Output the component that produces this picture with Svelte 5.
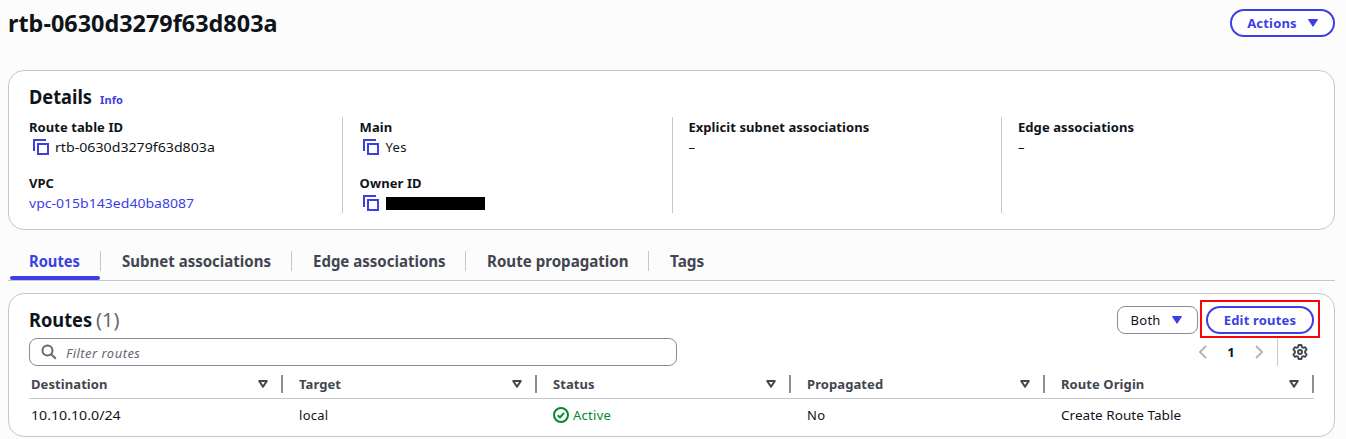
<script>
  const tabs = [
    { label: 'Routes', width: 91, scale: 0.92 },
    { label: 'Subnet associations', width: 191, scale: 0.938 },
    { label: 'Edge associations', width: 174, scale: 0.938 },
    { label: 'Route propagation', width: 183, scale: 0.944 },
    { label: 'Tags', width: 80, scale: 0.96 }
  ];
  const headers = ['Destination', 'Target', 'Status', 'Propagated', 'Route Origin'];
</script>

{#snippet copy()}
  <svg class="copy" width="16" height="16" viewBox="0 0 16 16" fill="none" stroke="currentColor" stroke-width="2">
    <path d="M1 12V1h12" /><path d="M5 5h10v10H5z" />
  </svg>
{/snippet}

{#snippet caret()}
  <svg width="12" height="10" viewBox="0 0 12 10"><path d="M1.500 1.500h9L6 8.300z" fill="currentColor" stroke="currentColor" stroke-linejoin="round" /></svg>
{/snippet}

<main>
  <header class="top">
    <h1>rtb-0630d3279f63d803a</h1>
    <button class="pill actions"><span>Actions</span>{@render caret()}</button>
  </header>

  <section class="card details">
    <div class="title"><h2><span class="narrow">Details</span></h2><a class="info" href="#info">Info</a></div>
    <div class="cols">
      <div class="col">
        <div class="field"><b>Route table ID</b><div class="val">{@render copy()}<span class="num">rtb-0630d3279f63d803a</span></div></div>
        <div class="field"><b>VPC</b><a class="num" href="#vpc">vpc-015b143ed40ba8087</a></div>
      </div>
      <div class="col">
        <div class="field"><b>Main</b><div class="val">{@render copy()}<span>Yes</span></div></div>
        <div class="field"><b>Owner ID</b><div class="val">{@render copy()}<i class="redacted"></i></div></div>
      </div>
      <div class="col"><div class="field"><b>Explicit subnet associations</b><span>–</span></div></div>
      <div class="col"><div class="field"><b>Edge associations</b><span>–</span></div></div>
    </div>
  </section>

  <nav>
    {#each tabs as tab, i}
      <div class="tab" class:active={i === 0} style:width="{tab.width}px"><span style:transform="scaleX({tab.scale})">{tab.label}</span></div>
    {/each}
  </nav>

  <section class="card routes">
    <div class="bar">
      <h2><span class="narrow">Routes</span><span class="count">(1)</span></h2>
      <div class="buttons">
        <button class="select"><span>Both</span>{@render caret()}</button>
        <div class="highlight"><button class="pill edit">Edit routes</button></div>
      </div>
    </div>
    <div class="tools">
      <div class="search">
        <svg width="16" height="16" viewBox="0 0 16 16" fill="none" stroke="currentColor" stroke-width="2"><circle cx="6.500" cy="6.500" r="5" /><path d="M10.200 10.200l4.600 4.600" /></svg>
        <span>Filter routes</span>
      </div>
      <div class="pager">
        <svg width="16" height="16" viewBox="0 0 16 16" fill="none" stroke="#b4b4bb" stroke-width="2"><path d="M11 2L5 8l6 6" /></svg>
        <b>1</b>
        <svg width="16" height="16" viewBox="0 0 16 16" fill="none" stroke="#b4b4bb" stroke-width="2"><path d="M5 2l6 6-6 6" /></svg>
        <div class="prefs">
          <svg width="16" height="16" viewBox="0 0 16 16" fill="none" stroke="#424650" stroke-width="1.900" stroke-linejoin="round"><path d="M6.600 1h2.800l.5 2.100 1.200.7 2.100-.6 1.400 2.400L13.100 7.200v1.600l1.500 1.600-1.400 2.400-2.100-.6-1.200.7L9.400 15H6.600l-.5-2.100-1.200-.7-2.100.6-1.400-2.400L2.900 8.800V7.200L1.400 5.600l1.400-2.400 2.100.6 1.200-.7z" /><circle cx="8" cy="8" r="2" /></svg>
        </div>
      </div>
    </div>
    <div class="grid head">
      {#each headers as h}
        <div class="th"><b>{h}</b>
          <svg width="12" height="10" viewBox="0 0 12 10" fill="none" stroke="#424650" stroke-width="2" stroke-linejoin="round"><path d="M2.200 2h7.600L6 7.800z" /></svg>
        </div>
      {/each}
    </div>
    <div class="grid row">
      <div><span class="num">10.10.10.0/24</span></div>
      <div>local</div>
      <div class="status">
        <svg width="16" height="16" viewBox="0 0 16 16" fill="none" stroke="currentColor" stroke-width="2"><circle cx="8" cy="8" r="7" /><path d="M4.700 8.300l2.300 2.100 4-4.500" /></svg>
        <span>Active</span>
      </div>
      <div>No</div>
      <div><span class="wide">Create Route Table</span></div>
    </div>
  </section>
</main>

<style>
  :global(body) { background: #fcfcfd; overflow: hidden; }
  main { box-sizing: border-box; height: 439px; padding: 0 11px 0 8px; color: #0f141a; font: 13px/20px "Noto Sans", sans-serif; letter-spacing: .28px; overflow: hidden; white-space: nowrap; }
  main * { box-sizing: border-box; }
  h1, h2 { margin: 0; font-weight: 700; }
  h1 { font-size: 24px; line-height: 30px; transform: scaleX(.975); transform-origin: left; letter-spacing: 0; }
  h2 { font-size: 20px; line-height: 24px; letter-spacing: 0; display: flex; }
  .narrow { display: block; width: 63px; transform: scaleX(.91); transform-origin: left; }
  b { font-weight: 700; letter-spacing: .08px; }
  a { color: #3b3fe4; text-decoration: none; }
  svg { flex: none; display: block; }
  .num, .wide { display: block; width: max-content; transform: scaleX(1.09); transform-origin: left; letter-spacing: 0; }
  a.num { transform: scaleX(1.08); }
  .wide { transform: scaleX(1.045); }
  button { margin: 0; font: inherit; letter-spacing: inherit; background: #fff; display: flex; align-items: center; height: 28px; padding: 0; }
  .pill { border: 2px solid #3b3fe4; border-radius: 14px; color: #3b3fe4; font-weight: 700; letter-spacing: .18px; justify-content: center; }
  .top { display: flex; justify-content: space-between; align-items: center; height: 46px; }
  .actions { width: 105px; gap: 10px; padding-left: 1px; }
  .card { background: #fff; border: 1px solid #c6c6cd; border-radius: 16px; padding: 0 20px; }
  .details { margin-top: 24px; height: 160px; padding-top: 14px; }
  .title { display: flex; align-items: baseline; gap: 8px; height: 32px; }
  .info { font-size: 11px; font-weight: 700; letter-spacing: .1px; }
  .cols { display: grid; grid-template-columns: repeat(4, 329.6px); margin-left: -16.500px; }
  .col { height: 96px; padding-left: 15.700px; display: flex; flex-direction: column; gap: 16px; border-left: 1px solid #c6c6cd; }
  .col:first-child { border-color: transparent; padding-left: 15.400px; }
  .col:nth-child(2) { padding-left: 16.500px; }
  .col:nth-child(2) .val { padding-left: 3px; gap: 7px; }
  .field { display: flex; flex-direction: column; height: 40px; }
  .val { display: flex; align-items: center; padding-left: 4px; gap: 6px; height: 20px; }
  .copy { color: #3b3fe4; }
  .redacted { width: 99px; height: 13px; background: #000; }
  nav { display: flex; height: 51px; padding-top: 11px; border-bottom: 1px solid #c6c6cd; font-size: 16px; font-weight: 700; color: #424650; letter-spacing: 0; }
  .tab { padding: 10px 0 0 21px; position: relative; }
  .tab span { display: inline-block; transform-origin: left; }
  .tab:first-child { margin-left: 2px; padding-left: 19px; }
  .tab:not(:last-child) { background: linear-gradient(#c6c6cd, #c6c6cd) right 10px / 1px 20px no-repeat; }
  .active { color: #3b3fe4; }
  .active::after { content: ''; position: absolute; left: 0; right: 1px; bottom: 0; height: 4px; border-radius: 2px; background: #3b3fe4; }
  .routes { margin-top: 12px; height: 144px; padding-top: 12px; }
  .bar { display: flex; justify-content: space-between; height: 32px; }
  .bar h2 { line-height: 28px; }
  .count { font-weight: 400; color: #656871; margin-left: 4px; }
  .buttons { display: flex; height: 28px; }
  .select { width: 81px; border: 1px solid #8c8c94; border-radius: 8px; color: #0f141a; padding-left: 12.500px; gap: 10.500px; }
  .select svg { color: #3b3fe4; }
  .highlight { position: relative; margin: -6px -6px -4px 2px; width: 120px; height: 38px; border: 2px solid #fa0505; padding: 4px; }
  .edit { width: 108px; }
  .tools { display: flex; justify-content: space-between; height: 28px; }
  .search { width: 648px; border: 1px solid #8c8c94; border-radius: 8px; display: flex; align-items: center; gap: 9px; padding-left: 11px; color: #656871; font-style: italic; letter-spacing: .46px; }
  .search span { padding-top: 2px; }
  .pager { display: flex; align-items: center; padding-right: 6px; }
  .pager b { width: 40px; text-align: center; }
  .prefs { margin-left: 10px; padding-left: 14px; height: 28px; display: flex; align-items: center; border-left: 1px solid #c6c6cd; }
  .grid { display: grid; grid-template-columns: 254px 254px 254px 254px 269px; }
  .grid > div { padding-left: 16px; }
  .grid > div:first-child { padding-left: 2px; }
  .head { height: 33px; border-bottom: 1px solid #c6c6cd; padding-top: 9px; color: #424650; }
  .th { display: flex; align-items: center; justify-content: space-between; height: 18px; padding-right: 12px; border-right: 2px solid #8c8c94; }
  .row { padding-top: 6px; }
  .status { display: flex; align-items: center; gap: 4px; color: #008a2b; }
</style>
